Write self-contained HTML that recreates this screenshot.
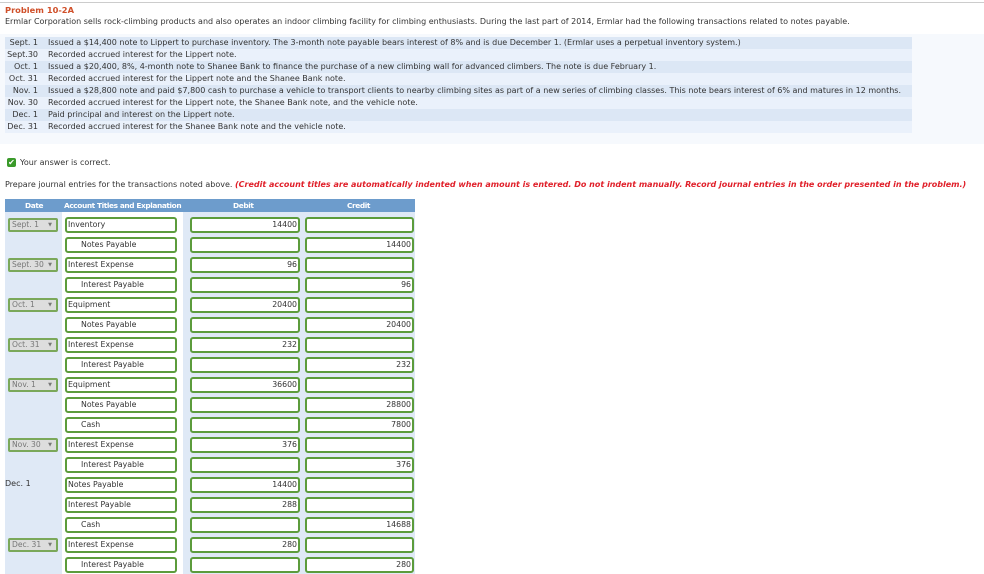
<!DOCTYPE html>
<html><head><style>
body{margin:0;width:984px;height:574px;overflow:hidden;background:#fff;font-family:"DejaVu Sans",Verdana,sans-serif;font-size:8px;color:#333;position:relative}
.a{position:absolute;white-space:nowrap}
.tr{position:absolute;left:5px;width:907px;height:12px;line-height:12px}
.tr span{position:absolute;left:0;width:33px;text-align:right}
.tr b{font-weight:normal;position:absolute;left:43px}
.inp{position:absolute;height:12px;border:2px solid #5c9c3c;border-radius:3px;background:#fff;line-height:12px;font-size:7.8px;box-sizing:content-box;overflow:hidden}
.inp:before{content:"";position:absolute;left:-3px;top:-4px;width:4px;height:4px;background:#4a9a2a}
.sel{position:absolute;left:8px;width:44px;height:10px;border:2px solid #7aa85a;background:#ddd;color:#777;line-height:10px;font-size:7.6px;padding-left:2px;border-radius:2px;white-space:nowrap}
.sel i{position:absolute;right:4px;font-style:normal;font-size:5px}
.num{text-align:right;padding-right:1px}
</style></head><body>
<div class="a" style="left:0;top:2px;width:984px;border-top:1px solid #ccc"></div>
<div class="a" style="left:5px;top:5px;color:#d0502a;font-weight:bold;font-size:8.3px">Problem 10-2A</div>
<div class="a" style="left:5px;top:17px">Ermlar Corporation sells rock-climbing products and also operates an indoor climbing facility for climbing enthusiasts. During the last part of 2014, Ermlar had the following transactions related to notes payable.</div>
<div class="a" style="left:0;top:34px;width:984px;height:110px;background:#f6f9fd"></div>
<div class="tr" style="top:37px;background:#dce7f5"><span>Sept. 1</span><b>Issued a $14,400 note to Lippert to purchase inventory. The 3-month note payable bears interest of 8% and is due December 1. (Ermlar uses a perpetual inventory system.)</b></div>
<div class="tr" style="top:49px;background:#eaf1fb"><span>Sept.30</span><b>Recorded accrued interest for the Lippert note.</b></div>
<div class="tr" style="top:61px;background:#dce7f5"><span>Oct. 1</span><b>Issued a $20,400, 8%, 4-month note to Shanee Bank to finance the purchase of a new climbing wall for advanced climbers. The note is due February 1.</b></div>
<div class="tr" style="top:73px;background:#eaf1fb"><span>Oct. 31</span><b>Recorded accrued interest for the Lippert note and the Shanee Bank note.</b></div>
<div class="tr" style="top:85px;background:#dce7f5"><span>Nov. 1</span><b>Issued a $28,800 note and paid $7,800 cash to purchase a vehicle to transport clients to nearby climbing sites as part of a new series of climbing classes. This note bears interest of 6% and matures in 12 months.</b></div>
<div class="tr" style="top:97px;background:#eaf1fb"><span>Nov. 30</span><b>Recorded accrued interest for the Lippert note, the Shanee Bank note, and the vehicle note.</b></div>
<div class="tr" style="top:109px;background:#dce7f5"><span>Dec. 1</span><b>Paid principal and interest on the Lippert note.</b></div>
<div class="tr" style="top:121px;background:#eaf1fb"><span>Dec. 31</span><b>Recorded accrued interest for the Shanee Bank note and the vehicle note.</b></div>
<div class="a" style="left:7px;top:158px;width:9px;height:9px;background:#3a9a2a;border-radius:2px;color:#fff;font-size:8px;line-height:9px;text-align:center">✔</div>
<div class="a" style="left:20px;top:158px">Your answer is correct.</div>
<div class="a" style="left:5px;top:180px">Prepare journal entries for the transactions noted above. <span style="color:#e0202a;font-weight:bold;font-style:italic;font-size:8px">(Credit account titles are automatically indented when amount is entered. Do not indent manually. Record journal entries in the order presented in the problem.)</span></div>
<div class="a" style="left:5px;top:199px;width:410px;height:13px;background:#6d9ccc;color:#fff;font-weight:bold;line-height:13px;font-size:7.4px;letter-spacing:-0.4px">
<span class="a" style="left:20px">Date</span><span class="a" style="left:59px">Account Titles and Explanation</span><span class="a" style="left:228px">Debit</span><span class="a" style="left:342px">Credit</span></div>
<div class="a" style="left:5px;top:212px;width:410px;height:362px;background:#dfe9f6"></div>
<div class="a" style="left:62px;top:212px;width:121px;height:362px;background:#fff"></div>
<div id="rows"></div>
<script>
var R=[["Sept. 1","Inventory",0,"14400",""],["","Notes Payable",1,"","14400"],["Sept. 30","Interest Expense",0,"96",""],["","Interest Payable",1,"","96"],["Oct. 1","Equipment",0,"20400",""],["","Notes Payable",1,"","20400"],["Oct. 31","Interest Expense",0,"232",""],["","Interest Payable",1,"","232"],["Nov. 1","Equipment",0,"36600",""],["","Notes Payable",1,"","28800"],["","Cash",1,"","7800"],["Nov. 30","Interest Expense",0,"376",""],["","Interest Payable",1,"","376"],["*Dec. 1","Notes Payable",0,"14400",""],["","Interest Payable",0,"288",""],["","Cash",1,"","14688"],["Dec. 31","Interest Expense",0,"280",""],["","Interest Payable",1,"","280"]];
var h="";
R.forEach(function(r,i){var t=217+20*i;
if(r[0][0]=="*")h+='<div class="a" style="left:5px;top:'+(t+2)+'px">'+r[0].slice(1)+'</div>';
else if(r[0])h+='<div class="sel" style="top:'+(t+1)+'px">'+r[0]+'<i>▼</i></div>';
h+='<div class="inp" style="left:65px;top:'+t+'px;padding-left:'+(r[2]?14:1)+'px;width:'+(r[2]?94:107)+'px">'+r[1]+'</div>';
h+='<div class="inp num" style="left:190px;top:'+t+'px;width:105px">'+r[3]+'</div>';
h+='<div class="inp num" style="left:305px;top:'+t+'px;width:104px">'+r[4]+'</div>';});
document.getElementById("rows").innerHTML=h;
</script>
</body></html>
